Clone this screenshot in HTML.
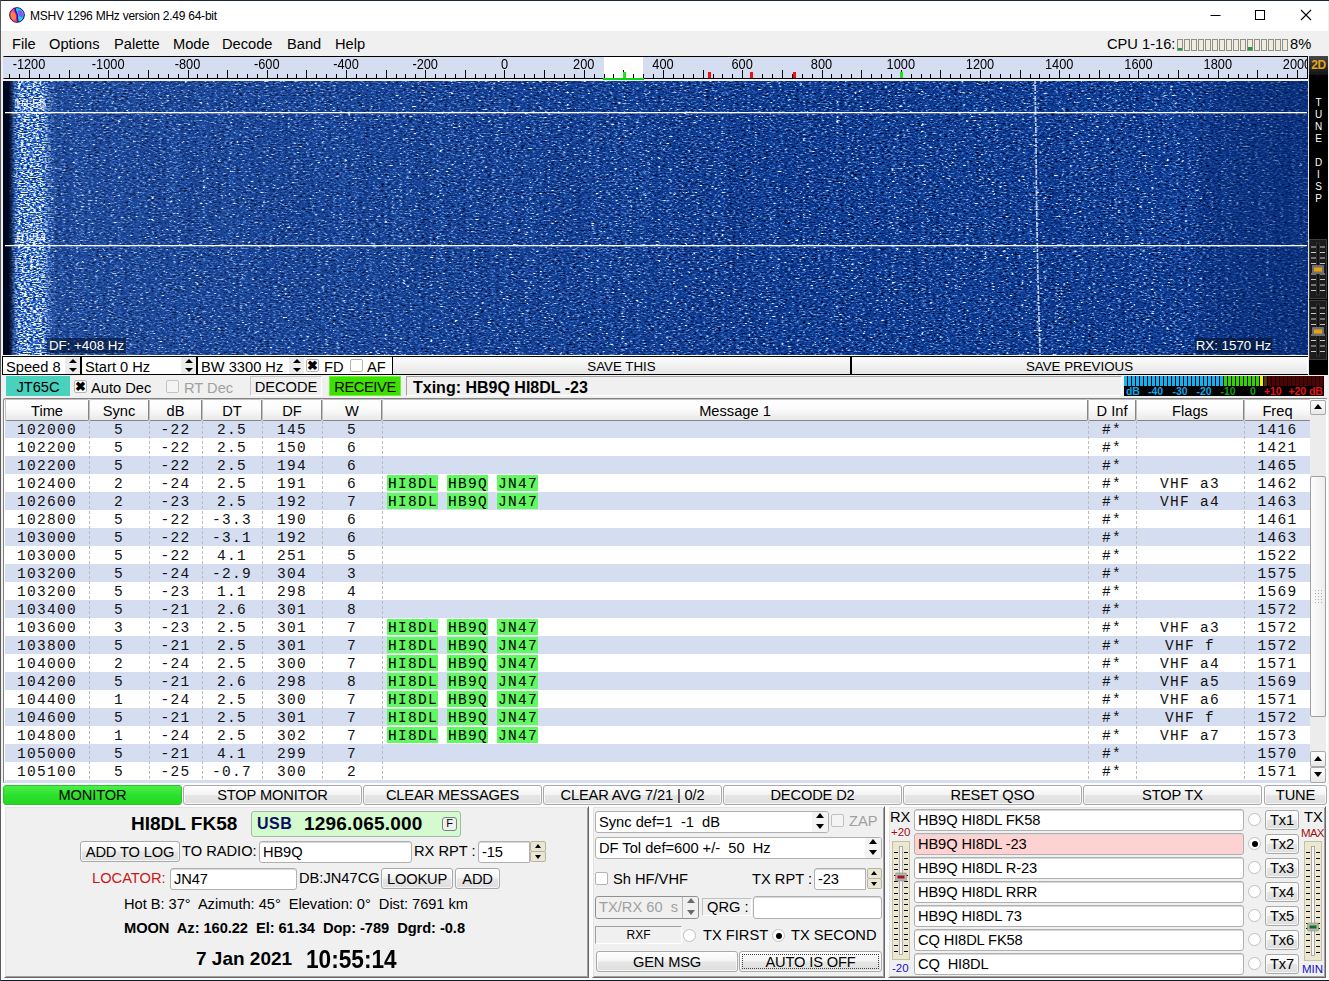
<!DOCTYPE html>
<html><head><meta charset="utf-8"><title>MSHV 1296 MHz version 2.49 64-bit</title>
<style>
*{box-sizing:border-box;margin:0;padding:0}
html,body{width:1329px;height:981px;overflow:hidden;background:#f0f0f0}
body{position:relative;font-family:"Liberation Sans",sans-serif;font-size:14.67px;color:#000}
.a{position:absolute}
i{font-style:normal}
#win{position:absolute;left:0;top:0;width:1329px;height:981px;background:#f0f0f0;overflow:hidden}
#wb{left:0;top:0;width:1329px;height:981px;border-left:1px solid #5a5a5a;border-top:1px solid #1c2838;border-bottom:1px solid #0c1c2c;z-index:9;pointer-events:none}
#lo{left:1px;top:783px;width:1328px;height:197px;background:#fbfbfb}
#title{left:1px;top:1px;width:1327px;height:30px;background:#fff}
#title .t{left:29px;top:7px;font-size:12px;line-height:16px;white-space:nowrap;letter-spacing:-0.24px}
#menu{left:1px;top:31px;width:1327px;height:25px;background:#f0f0f0}
#menu span{position:absolute;top:5px;line-height:17px;white-space:nowrap}
#scale{left:3px;top:56px;width:1305px;border-right:1px solid #000;height:23px;background:#d5ddf1;border-top:1px solid #000;border-bottom:1px solid #000;border-left:1px solid #d5ddf1;overflow:hidden}
.tk{position:absolute;width:1px;background:#000;top:17px;height:4px;margin-left:-1px}
.tk.M{top:13px;height:8px}
.sl{position:absolute;top:1px;width:60px;text-align:center;font-size:12.800px;line-height:14px;margin-left:-1px;transform:scaleY(1.08);transform-origin:50% 60%}
#wf{left:3px;top:81px;width:1305px;height:274px;background:#0b3f9e;overflow:hidden}
.wl{color:#fff;font-size:13px;line-height:14px;opacity:.8}
.wb{color:#fff;font-size:13.33px;line-height:15px;height:15px;background:rgba(0,16,48,.6);text-align:center;white-space:nowrap}
#rp{left:1309px;top:56px;width:19px;height:319px;background:#000}
.b2d{left:0;top:0;width:19px;height:19px;background:linear-gradient(#484848,#141414);color:#e8a418;font-weight:bold;font-size:12px;line-height:19px;text-align:center;letter-spacing:-0.5px}
.vt{left:0;width:19px;text-align:center;color:#fff;font-size:10px;line-height:12px;margin-top:1px}
/* control row */
#ctl{left:2px;top:356px;width:1306px;border-left:1px solid #000;height:19px;background:#fff;border-top:1px solid #000;border-bottom:1px solid #000}
.sp{position:absolute;top:0;height:17px;background:#fff;border-right:1px solid #000;border-left:1px solid #000;font-size:14.67px;line-height:20px;white-space:nowrap;overflow:hidden}
.sp .tx{position:absolute;left:3px;top:0}
.sp .ar{position:absolute;right:0;top:0;width:15px;height:17px;background:#ececec}
.ar:before,.ar:after{content:"";position:absolute;left:3.500px;border:4px solid transparent}
.ar:before{top:-2px;border-bottom:4.500px solid #000}
.ar:after{top:10.500px;border-top:4.500px solid #000}
.cb{position:absolute;width:13px;height:13px;background:#fff;border:1px solid #b4b4b4;border-radius:2px}
.cb.x{color:#000;font-size:13px;line-height:11px;text-align:center;font-weight:bold}
.sbtn{position:absolute;top:0;height:17px;background:linear-gradient(#fdfdfd,#e6e6e6);font-size:13.330px;line-height:19px;text-align:center}
/* mode row */
.fr{position:absolute;border:1px solid;border-color:#a0a0a0 #fff #fff #a0a0a0}
.dbt{top:10.500px;font-size:10.500px;letter-spacing:-0.100px;font-weight:bold;line-height:9px;white-space:nowrap}
/* table */
#tbf{left:3px;top:398px;width:1325px;height:386px;border-radius:3px;border:1px solid;border-color:#828282 #fff #fff #828282;background:#fff}
#tb{left:5px;top:399px;width:1305px;height:384px;background:#fff;overflow:hidden}
.th{left:0;top:0;width:1306px;height:22px;background:#f0f0f0;z-index:3}
.hc{position:absolute;top:0;height:22px;text-align:center;line-height:23px;background:linear-gradient(#fff 0,#fbfbfb 45%,#e9e9e9 100%);border:1px solid;border-color:#c0c0c0 #858585 #858585 #c0c0c0;border-radius:2px;white-space:nowrap}
.tr{position:absolute;left:0;width:1306px;height:18px;font-family:"Liberation Mono",monospace;font-size:14.500px;letter-spacing:1.300px;line-height:20px;color:#111}
.tr.b{background:#d5ddf1}
.tr .c{position:absolute;top:0;text-align:center;white-space:pre;height:18px}
.tr .c.m{text-align:left;padding-left:5px}
.tr .c.m b{font-weight:normal;background:#62f862;display:inline-block;height:16px;line-height:18px;margin-top:1px;padding-left:1px;margin-right:-1px;color:#000;vertical-align:top}
.ds{position:absolute;top:22px;width:1px;height:360px;background:repeating-linear-gradient(#bcbcbc 0 3px,transparent 3px 5px)}
#vsb{left:1310px;top:400px;width:16px;height:383px;background:#ececec;background-image:radial-gradient(#d8d8d8 0.500px,transparent 0.600px);background-size:2px 2px}
.sbb{left:0;width:16px;background:linear-gradient(#fff,#e8e8e8);border:1px solid #a8a8a8;border-radius:2px}
.sbth{left:0;width:16px;background:linear-gradient(90deg,#fdfdfd,#ededed);border:1px solid #a0a0a0;border-radius:2px}
.up,.dn{position:absolute;left:3px;top:3px;border:4px solid transparent}
.up{border-bottom:5px solid #000;top:-1px}
.dn{border-top:5px solid #000;top:4px}
.grip{position:absolute;left:3px;top:112px;width:9px;height:15px;background-image:radial-gradient(#b0b0b0 0.800px,transparent 0.900px);background-size:3px 3px}
/* buttons */
.bt{letter-spacing:-0.150px;position:absolute;background:linear-gradient(#fefefe 0,#f4f4f4 48%,#e6e6e6 52%,#dedede 100%);border:1px solid #a9a9a9;border-radius:3px;text-align:center;white-space:nowrap;box-shadow:inset 0 0 0 1px rgba(255,255,255,.7)}
.bb{top:785px;height:20px;line-height:19px}
.pn{position:absolute;background:#f0f0f0;border:1px solid;border-color:#fff #666 #666 #fff;box-shadow:inset 1px 1px 0 #e3e3e3,inset -1px -1px 0 #a0a0a0}
.in{position:absolute;background:#fff;border:1px solid #b0b0b0;border-radius:3px;white-space:pre;overflow:hidden;box-shadow:inset 0 1px 0 #d8d8d8}
.in span{position:absolute;left:3px;letter-spacing:-0.120px}
.lb{position:absolute;white-space:pre;line-height:17px}
.sa{position:absolute;background:#e9e6d4;border:1px solid #b8b4a0;border-radius:2px}
.sa:after{content:"";position:absolute;left:50%;margin-left:-3.500px;border:3.500px solid transparent}
.sa.u:after{top:-1px;border-bottom:4.500px solid #000}
.sa.d:after{top:3px;border-top:4.500px solid #000}
.sw{position:absolute;background:#fff;border:1px solid #b0b0b0;border-radius:3px;overflow:hidden;white-space:pre}
.sw span{position:absolute;left:3px}
.sw .ab{position:absolute;right:0;top:0;bottom:0;width:16px;background:#f4f4f4}
.sw .ab:before,.sw .ab:after{content:"";position:absolute;left:4px;border:4px solid transparent}
.sw .ab:before{top:-3px;border-bottom:5px solid #000}
.sw .ab:after{bottom:-1px;border-top:5px solid #000}
.rd{position:absolute;width:13px;height:13px;border-radius:50%;background:#fff;border:1px solid #c0c0c0}
.rd.on:after{content:"";position:absolute;left:2.500px;top:2.500px;width:6px;height:6px;border-radius:50%;background:#000}
</style></head><body><div id="win">
<div id="wb" class="a"></div>
<div id="title" class="a">
<svg class="a" style="left:8px;top:6px" width="16" height="16" viewBox="0 0 16 16"><defs><clipPath id="ic"><circle cx="8" cy="8" r="7.300"/></clipPath></defs><g clip-path="url(#ic)"><rect width="16" height="16" fill="#ff3cb4"/><ellipse cx="4.500" cy="8.800" rx="2.500" ry="3.700" fill="#ff8a30" transform="rotate(-18 4.500 8.800)"/><path d="M6.200 0C5.200 4 9 7 8.400 10 8 13 9.300 15 10.300 16H16V0z" fill="#16d2ff"/><path d="M6.200 0C5.200 4 9 7 8.400 10 8 13 9.300 15 10.300 16" fill="none" stroke="#1414c8" stroke-width="1.500"/><path d="M5.300 0C4.300 4 8.100 7 7.500 10 7.100 13 8.400 15 9.400 16" fill="none" stroke="#e8103c" stroke-width="0.800"/><ellipse cx="11.600" cy="6.600" rx="2.200" ry="3.800" fill="#8c50ff" transform="rotate(-20 11.600 6.600)"/><path d="M15.500 5c.3 3-.5 6-3 9" fill="none" stroke="#2a30d8" stroke-width="1"/></g><circle cx="8" cy="8" r="7.400" fill="none" stroke="#1c1c2c" stroke-width="0.900"/></svg>
<div class="a t">MSHV 1296 MHz version 2.49 64-bit</div>
<svg class="a" style="left:1200px;top:0" width="127" height="30" viewBox="0 0 127 30"><path d="M9.500 14.500h10" stroke="#000" stroke-width="1" fill="none"/><rect x="54.500" y="9.500" width="9" height="9" fill="none" stroke="#000" stroke-width="1"/><path d="M100 9l10 10M110 9l-10 10" stroke="#000" stroke-width="1.100" fill="none"/></svg>
</div>
<div id="menu" class="a">
<span style="left:11px">File</span><span style="left:48px">Options</span><span style="left:113px">Palette</span><span style="left:172px">Mode</span><span style="left:221px">Decode</span><span style="left:286px">Band</span><span style="left:334px">Help</span>
<span style="left:1106px">CPU 1-16:</span><span style="left:1289px">8%</span>
<div class="a" id="cpu" style="left:1176px;top:8px;width:112px;height:13px"><i class="a" style="left:0px;top:0;width:6px;height:12px;background:#f0edd9;border:1px solid #8e8e8e"><i class="a" style="left:0;bottom:0;width:4px;height:2px;background:#18a040"></i></i><i class="a" style="left:7px;top:0;width:6px;height:12px;background:#f0edd9;border:1px solid #8e8e8e"></i><i class="a" style="left:14px;top:0;width:6px;height:12px;background:#f0edd9;border:1px solid #8e8e8e"></i><i class="a" style="left:21px;top:0;width:6px;height:12px;background:#f0edd9;border:1px solid #8e8e8e"></i><i class="a" style="left:28px;top:0;width:6px;height:12px;background:#f0edd9;border:1px solid #8e8e8e"></i><i class="a" style="left:35px;top:0;width:6px;height:12px;background:#f0edd9;border:1px solid #8e8e8e"></i><i class="a" style="left:42px;top:0;width:6px;height:12px;background:#f0edd9;border:1px solid #8e8e8e"></i><i class="a" style="left:49px;top:0;width:6px;height:12px;background:#f0edd9;border:1px solid #8e8e8e"></i><i class="a" style="left:56px;top:0;width:6px;height:12px;background:#f0edd9;border:1px solid #8e8e8e"></i><i class="a" style="left:63px;top:0;width:6px;height:12px;background:#f0edd9;border:1px solid #8e8e8e"></i><i class="a" style="left:70px;top:0;width:6px;height:12px;background:#f0edd9;border:1px solid #8e8e8e"><i class="a" style="left:0;bottom:0;width:4px;height:3px;background:#18a040"></i></i><i class="a" style="left:77px;top:0;width:6px;height:12px;background:#f0edd9;border:1px solid #8e8e8e"></i><i class="a" style="left:84px;top:0;width:6px;height:12px;background:#f0edd9;border:1px solid #8e8e8e"></i><i class="a" style="left:91px;top:0;width:6px;height:12px;background:#f0edd9;border:1px solid #8e8e8e"></i><i class="a" style="left:98px;top:0;width:6px;height:12px;background:#f0edd9;border:1px solid #8e8e8e"></i><i class="a" style="left:105px;top:0;width:6px;height:12px;background:#f0edd9;border:1px solid #8e8e8e"></i></div>
</div>
<div id="scale" class="a">
<div class="a" style="left:600px;top:0;width:39px;height:21px;background:#fff"></div>
<i class="tk" style="left:6px"></i>
<i class="tk" style="left:16px"></i>
<i class="tk M" style="left:26px"></i>
<i class="tk" style="left:36px"></i>
<i class="tk" style="left:46px"></i>
<i class="tk" style="left:56px"></i>
<i class="tk M" style="left:66px"></i>
<i class="tk" style="left:76px"></i>
<i class="tk" style="left:85px"></i>
<i class="tk" style="left:95px"></i>
<i class="tk M" style="left:105px"></i>
<i class="tk" style="left:115px"></i>
<i class="tk" style="left:125px"></i>
<i class="tk" style="left:135px"></i>
<i class="tk M" style="left:145px"></i>
<i class="tk" style="left:155px"></i>
<i class="tk" style="left:165px"></i>
<i class="tk" style="left:175px"></i>
<i class="tk M" style="left:185px"></i>
<i class="tk" style="left:194px"></i>
<i class="tk" style="left:204px"></i>
<i class="tk" style="left:214px"></i>
<i class="tk M" style="left:224px"></i>
<i class="tk" style="left:234px"></i>
<i class="tk" style="left:244px"></i>
<i class="tk" style="left:254px"></i>
<i class="tk M" style="left:264px"></i>
<i class="tk" style="left:274px"></i>
<i class="tk" style="left:284px"></i>
<i class="tk" style="left:293px"></i>
<i class="tk M" style="left:303px"></i>
<i class="tk" style="left:313px"></i>
<i class="tk" style="left:323px"></i>
<i class="tk" style="left:333px"></i>
<i class="tk M" style="left:343px"></i>
<i class="tk" style="left:353px"></i>
<i class="tk" style="left:363px"></i>
<i class="tk" style="left:373px"></i>
<i class="tk M" style="left:383px"></i>
<i class="tk" style="left:393px"></i>
<i class="tk" style="left:402px"></i>
<i class="tk" style="left:412px"></i>
<i class="tk M" style="left:422px"></i>
<i class="tk" style="left:432px"></i>
<i class="tk" style="left:442px"></i>
<i class="tk" style="left:452px"></i>
<i class="tk M" style="left:462px"></i>
<i class="tk" style="left:472px"></i>
<i class="tk" style="left:482px"></i>
<i class="tk" style="left:492px"></i>
<i class="tk M" style="left:501px"></i>
<i class="tk" style="left:511px"></i>
<i class="tk" style="left:521px"></i>
<i class="tk" style="left:531px"></i>
<i class="tk M" style="left:541px"></i>
<i class="tk" style="left:551px"></i>
<i class="tk" style="left:561px"></i>
<i class="tk" style="left:571px"></i>
<i class="tk M" style="left:581px"></i>
<i class="tk" style="left:591px"></i>
<i class="tk" style="left:601px"></i>
<i class="tk" style="left:610px"></i>
<i class="tk M" style="left:620px"></i>
<i class="tk" style="left:630px"></i>
<i class="tk" style="left:640px"></i>
<i class="tk" style="left:650px"></i>
<i class="tk M" style="left:660px"></i>
<i class="tk" style="left:670px"></i>
<i class="tk" style="left:680px"></i>
<i class="tk" style="left:690px"></i>
<i class="tk M" style="left:700px"></i>
<i class="tk" style="left:710px"></i>
<i class="tk" style="left:719px"></i>
<i class="tk" style="left:729px"></i>
<i class="tk M" style="left:739px"></i>
<i class="tk" style="left:749px"></i>
<i class="tk" style="left:759px"></i>
<i class="tk" style="left:769px"></i>
<i class="tk M" style="left:779px"></i>
<i class="tk" style="left:789px"></i>
<i class="tk" style="left:799px"></i>
<i class="tk" style="left:809px"></i>
<i class="tk M" style="left:819px"></i>
<i class="tk" style="left:828px"></i>
<i class="tk" style="left:838px"></i>
<i class="tk" style="left:848px"></i>
<i class="tk M" style="left:858px"></i>
<i class="tk" style="left:868px"></i>
<i class="tk" style="left:878px"></i>
<i class="tk" style="left:888px"></i>
<i class="tk M" style="left:898px"></i>
<i class="tk" style="left:908px"></i>
<i class="tk" style="left:918px"></i>
<i class="tk" style="left:927px"></i>
<i class="tk M" style="left:937px"></i>
<i class="tk" style="left:947px"></i>
<i class="tk" style="left:957px"></i>
<i class="tk" style="left:967px"></i>
<i class="tk M" style="left:977px"></i>
<i class="tk" style="left:987px"></i>
<i class="tk" style="left:997px"></i>
<i class="tk" style="left:1007px"></i>
<i class="tk M" style="left:1017px"></i>
<i class="tk" style="left:1027px"></i>
<i class="tk" style="left:1036px"></i>
<i class="tk" style="left:1046px"></i>
<i class="tk M" style="left:1056px"></i>
<i class="tk" style="left:1066px"></i>
<i class="tk" style="left:1076px"></i>
<i class="tk" style="left:1086px"></i>
<i class="tk M" style="left:1096px"></i>
<i class="tk" style="left:1106px"></i>
<i class="tk" style="left:1116px"></i>
<i class="tk" style="left:1126px"></i>
<i class="tk M" style="left:1135px"></i>
<i class="tk" style="left:1145px"></i>
<i class="tk" style="left:1155px"></i>
<i class="tk" style="left:1165px"></i>
<i class="tk M" style="left:1175px"></i>
<i class="tk" style="left:1185px"></i>
<i class="tk" style="left:1195px"></i>
<i class="tk" style="left:1205px"></i>
<i class="tk M" style="left:1215px"></i>
<i class="tk" style="left:1225px"></i>
<i class="tk" style="left:1235px"></i>
<i class="tk" style="left:1244px"></i>
<i class="tk M" style="left:1254px"></i>
<i class="tk" style="left:1264px"></i>
<i class="tk" style="left:1274px"></i>
<i class="tk" style="left:1284px"></i>
<i class="tk M" style="left:1294px"></i>
<span class="sl" style="left:-4.0px">-1200</span>
<span class="sl" style="left:75.2px">-1000</span>
<span class="sl" style="left:154.5px">-800</span>
<span class="sl" style="left:233.8px">-600</span>
<span class="sl" style="left:313.0px">-400</span>
<span class="sl" style="left:392.2px">-200</span>
<span class="sl" style="left:471.5px">0</span>
<span class="sl" style="left:550.8px">200</span>
<span class="sl" style="left:630.0px">400</span>
<span class="sl" style="left:709.2px">600</span>
<span class="sl" style="left:788.5px">800</span>
<span class="sl" style="left:867.8px">1000</span>
<span class="sl" style="left:947.0px">1200</span>
<span class="sl" style="left:1026.2px">1400</span>
<span class="sl" style="left:1105.5px">1600</span>
<span class="sl" style="left:1184.8px">1800</span>
<span class="sl" style="left:1264.0px">2000</span>
<div class="a" style="left:619px;top:15px;width:3px;height:7px;background:#20e020"></div>
<div class="a" style="left:704px;top:15px;width:3px;height:6px;background:#f01010"></div>
<div class="a" style="left:746px;top:15px;width:3px;height:6px;background:#f01010"></div>
<div class="a" style="left:789px;top:15px;width:3px;height:6px;background:#f01010"></div>
<div class="a" style="left:896px;top:15px;width:3px;height:6px;background:#20e020"></div>
</div>
<div class="a" style="left:603px;top:78px;width:41px;height:2px;background:#10d010"></div>

<div id="wf" class="a">
<svg class="a" style="left:0;top:0" width="1305" height="274">
<defs>
<filter id="nz" x="0" y="0" width="100%" height="100%" color-interpolation-filters="sRGB">
<feTurbulence type="fractalNoise" baseFrequency="0.33 0.71" numOctaves="2" seed="7"/>
<feColorMatrix type="matrix" values="1 0 0 0 0  1 0 0 0 0  1 0 0 0 0  0 0 0 0 1" result="t1"/>
<feTurbulence type="fractalNoise" baseFrequency="0.27 0.63" numOctaves="2" seed="31"/>
<feColorMatrix type="matrix" values="1 0 0 0 0  1 0 0 0 0  1 0 0 0 0  0 0 0 0 1" result="t2"/>
<feComposite in="t1" in2="t2" operator="arithmetic" k1="0" k2="1" k3="1" k4="-0.5" result="t12"/>
<feTurbulence type="fractalNoise" baseFrequency="0.21 0.004" numOctaves="2" seed="5"/>
<feColorMatrix type="matrix" values="1 0 0 0 0  1 0 0 0 0  1 0 0 0 0  0 0 0 0 1" result="t3"/>
<feComposite in="t12" in2="t3" operator="arithmetic" k1="0" k2="1" k3="0.16" k4="-0.08" result="t"/>
<feColorMatrix in="t" type="matrix" values="1 0 0 0 0  1 0 0 0 0  1 0 0 0 0  0 0 0 0 1"/>
<feComponentTransfer>
<feFuncR type="table" tableValues="0 0 .01 .03 .04 .05 .09 .22 .4 .72 1"/>
<feFuncG type="table" tableValues="0 .03 .08 .17 .205 .235 .285 .41 .57 .81 1"/>
<feFuncB type="table" tableValues=".05 .15 .28 .46 .535 .58 .63 .72 .81 .93 1"/>
</feComponentTransfer>
</filter>
<filter id="nz2" x="0" y="0" width="100%" height="100%" color-interpolation-filters="sRGB">
<feTurbulence type="fractalNoise" baseFrequency="0.33 0.8" numOctaves="2" seed="23" result="t"/>
<feColorMatrix in="t" type="matrix" values="1 0 0 0 0  1 0 0 0 0  1 0 0 0 0  0 0 0 0 1"/>
<feComponentTransfer>
<feFuncR type="table" tableValues="0 0 0 0.03 0.08 0.3 0.75 1 1 1 1"/>
<feFuncG type="table" tableValues="0 0 0.06 0.2 0.32 0.5 0.84 1 1 1 1"/>
<feFuncB type="table" tableValues="0 0.2 0.42 0.6 0.7 0.82 0.96 1 0.1 0 0"/>
</feComponentTransfer>
</filter>
<linearGradient id="lm" x1="0" x2="1"><stop offset="0" stop-color="#fff" stop-opacity="0"/><stop offset="0.1" stop-color="#fff" stop-opacity="0.5"/><stop offset="0.2" stop-color="#fff" stop-opacity="1"/><stop offset="0.7" stop-color="#fff" stop-opacity="1"/><stop offset="0.85" stop-color="#fff" stop-opacity="0.5"/><stop offset="1" stop-color="#fff" stop-opacity="0"/></linearGradient>
<mask id="mk"><rect x="7" y="0" width="46" height="274" fill="url(#lm)"/></mask>
<linearGradient id="dk" x1="0" x2="1"><stop offset="0" stop-color="#000820" stop-opacity="1"/><stop offset="0.45" stop-color="#000820" stop-opacity="1"/><stop offset="1" stop-color="#000820" stop-opacity="0"/></linearGradient>
<linearGradient id="lt" x1="0" x2="1"><stop offset="0" stop-color="#88a4d4" stop-opacity="0.14"/><stop offset="1" stop-color="#88a4d4" stop-opacity="0"/></linearGradient>
<linearGradient id="rd" x1="0" x2="1"><stop offset="0" stop-color="#04256a" stop-opacity="0"/><stop offset="0.4" stop-color="#04256a" stop-opacity="0.4"/><stop offset="1" stop-color="#04256a" stop-opacity="0.55"/></linearGradient>
</defs>
<rect x="0" y="0" width="1305" height="274" filter="url(#nz)"/>
<g mask="url(#mk)"><rect x="0" y="0" width="70" height="274" filter="url(#nz2)"/></g>
<rect x="0" y="0" width="12" height="274" fill="url(#dk)"/>
<rect x="1180" y="0" width="125" height="274" fill="url(#rd)"/>
<rect x="50" y="0" width="750" height="274" fill="url(#lt)"/>
<path d="M1032 0L1033 60L1033.500 120L1035 200L1037 274" stroke="#dfe8fa" stroke-width="1.700" stroke-dasharray="3 1 6 1 2 2 5 1" opacity="0.8" fill="none"/>
<rect x="2" y="31" width="1302" height="1.300" fill="#fff"/>
<rect x="2" y="164" width="1302" height="1.300" fill="#fff"/>
</svg>
<div class="a wl" style="left:11px;top:16px">10:55</div>
<div class="a wl" style="left:11px;top:150px">10:54</div>
<div class="a wb" style="left:44px;top:257px;width:79px">DF: +408 Hz</div>
<div class="a wb" style="left:1192px;top:257px;width:77px">RX: 1570 Hz</div>
</div>
<div class="a" style="left:3px;top:355px;width:1305px;height:1px;background:#fff"></div>
<div class="a" style="left:1308px;top:56px;width:1px;height:319px;background:#e4e4e4"></div>
<div id="rp" class="a">
<div class="a b2d">2D</div>
<div class="a vt" style="top:40px">T</div><div class="a vt" style="top:52px">U</div><div class="a vt" style="top:64px">N</div><div class="a vt" style="top:76px">E</div>
<div class="a vt" style="top:100px">D</div><div class="a vt" style="top:112px">I</div><div class="a vt" style="top:124px">S</div><div class="a vt" style="top:136px">P</div>
<svg class="a" style="left:0;top:183px" width="19" height="122" viewBox="0 0 19 122">
<g id="sld"><rect x="0.500" y="0.500" width="17" height="59" fill="#1c1c1c" stroke="#3c3c3c"/><rect x="7.500" y="4" width="3" height="52" fill="#111" stroke="#444" stroke-width="0.600"/>
<path d="M2 8h5M11 8h5M2 13.500h5M11 13.500h5M2 19h5M11 19h5M2 24.500h5M11 24.500h5M2 35h5M11 35h5M2 40.500h5M11 40.500h5M2 46h5M11 46h5M2 51.500h5M11 51.500h5" stroke="#c8c8c8" stroke-width="1"/></g>
<use href="#sld" y="61"/>
<rect x="3" y="26" width="12" height="9" rx="1" fill="#707070"/><rect x="5" y="28.500" width="8" height="4" fill="#e8a010"/>
<rect x="3" y="88" width="12" height="9" rx="1" fill="#707070"/><rect x="5" y="90.500" width="8" height="4" fill="#e8a010"/>
</svg>
</div>

<div id="ctl" class="a">
<div class="sp" style="left:0;width:78px;border-left:0"><span class="tx" style="left:3px">Speed 8</span><i class="ar"></i></div>
<div class="sp" style="left:78px;width:116px"><span class="tx">Start 0 Hz</span><i class="ar"></i></div>
<div class="sp" style="left:194px;width:108px"><span class="tx">BW 3300 Hz</span><i class="ar"></i></div>
<div class="sp" style="left:301px;width:89px;border-left:0"><i class="cb x" style="left:2px;top:2px">&#10006;</i><span class="tx" style="left:20px">FD</span><i class="cb" style="left:46px;top:2px"></i><span class="tx" style="left:63px">AF</span></div>
<div class="sbtn" style="left:390px;width:457px">SAVE THIS</div>
<div class="a" style="left:847px;top:-1px;width:2px;height:19px;background:#000"></div>
<div class="sbtn" style="left:849px;width:455px">SAVE PREVIOUS</div>
</div>
<div class="a" style="left:6px;top:376px;width:64px;height:20px;background:#48d1bc;text-align:center;line-height:22px">JT65C</div>
<i class="cb x" style="left:74px;top:380px">&#10006;</i><div class="a" style="left:91px;top:379px;line-height:18px">Auto Dec</div>
<i class="cb" style="left:166px;top:380px;background:#f4f4f4;border-color:#c4c4c4"></i><div class="a" style="left:184px;top:379px;line-height:18px;color:#a0a0a0">RT Dec</div>
<div class="fr" style="left:250px;top:376px;width:72px;height:20px;text-align:center;line-height:20px;border-color:#c8c8c8 #fff #fff #c8c8c8">DECODE</div>
<div class="a" style="left:329px;top:376px;width:72px;height:20px;background:#3ee000;border:1px solid #6cf03c;text-align:center;line-height:20px;letter-spacing:-0.400px">RECEIVE</div>
<div class="fr" style="left:406px;top:376px;width:716px;height:20px;font-weight:bold;font-size:16px;line-height:21px;padding-left:6px">Txing: HB9Q HI8DL -23</div>
<div id="dbm" class="a" style="left:1124px;top:376px;width:200px;height:20px;background:#000;overflow:hidden">
<div class="a" style="left:0;top:0;width:100px;height:10px;background:repeating-linear-gradient(90deg,#10b4f4 0 3px,#000 3px 4px)"></div>
<div class="a" style="left:100px;top:0;width:36px;height:10px;background:repeating-linear-gradient(90deg,#30d400 0 3px,#000 3px 4px)"></div>
<div class="a" style="left:136px;top:0;width:4px;height:10px;background:repeating-linear-gradient(90deg,#f4f000 0 3px,#000 3px 4px)"></div>
<div class="a" style="left:140px;top:0;width:4px;height:10px;background:repeating-linear-gradient(90deg,#503410 0 3px,#000 3px 4px)"></div>
<div class="a" style="left:144px;top:0;width:56px;height:10px;background:repeating-linear-gradient(90deg,#4c0404 0 3px,#1c0000 3px 4px)"></div>
<div class="a dbt" style="left:2px;color:#10a8e8">dB</div><div class="a dbt" style="left:24px;color:#10a8e8">-40</div><div class="a dbt" style="left:48.500px;color:#10a8e8">-30</div><div class="a dbt" style="left:72.500px;color:#10a8e8">-20</div>
<div class="a dbt" style="left:96.500px;color:#10a010">-10</div><div class="a dbt" style="left:126px;color:#10a010">0</div>
<div class="a dbt" style="left:140px;color:#f01010">+10</div><div class="a dbt" style="left:164.500px;color:#f01010">+20</div><div class="a dbt" style="left:185px;color:#f01010">dB</div>
</div>

<div id="tbf" class="a"></div>

<div id="tb" class="a">
<div class="a th">
<div class="hc" style="left:0px;width:84px">Time</div>
<div class="hc" style="left:84px;width:60px">Sync</div>
<div class="hc" style="left:144px;width:53px">dB</div>
<div class="hc" style="left:197px;width:60px">DT</div>
<div class="hc" style="left:257px;width:60px">DF</div>
<div class="hc" style="left:317px;width:60px">W</div>
<div class="hc" style="left:377px;width:706px">Message 1</div>
<div class="hc" style="left:1083px;width:48px">D Inf</div>
<div class="hc" style="left:1131px;width:108px">Flags</div>
<div class="hc" style="left:1239px;width:67px">Freq</div>
</div>
<div class="tr b" style="top:21px">
<span class="c" style="left:0px;width:84px">102000</span>
<span class="c" style="left:84px;width:60px">5</span>
<span class="c" style="left:144px;width:53px">-22</span>
<span class="c" style="left:197px;width:60px">2.5</span>
<span class="c" style="left:257px;width:60px">145</span>
<span class="c" style="left:317px;width:60px">5</span>
<span class="c" style="left:1083px;width:48px">#*</span>
<span class="c" style="left:1239px;width:67px">1416</span>
</div>
<div class="tr" style="top:39px">
<span class="c" style="left:0px;width:84px">102200</span>
<span class="c" style="left:84px;width:60px">5</span>
<span class="c" style="left:144px;width:53px">-22</span>
<span class="c" style="left:197px;width:60px">2.5</span>
<span class="c" style="left:257px;width:60px">150</span>
<span class="c" style="left:317px;width:60px">6</span>
<span class="c" style="left:1083px;width:48px">#*</span>
<span class="c" style="left:1239px;width:67px">1421</span>
</div>
<div class="tr b" style="top:57px">
<span class="c" style="left:0px;width:84px">102200</span>
<span class="c" style="left:84px;width:60px">5</span>
<span class="c" style="left:144px;width:53px">-22</span>
<span class="c" style="left:197px;width:60px">2.5</span>
<span class="c" style="left:257px;width:60px">194</span>
<span class="c" style="left:317px;width:60px">6</span>
<span class="c" style="left:1083px;width:48px">#*</span>
<span class="c" style="left:1239px;width:67px">1465</span>
</div>
<div class="tr" style="top:75px">
<span class="c" style="left:0px;width:84px">102400</span>
<span class="c" style="left:84px;width:60px">2</span>
<span class="c" style="left:144px;width:53px">-24</span>
<span class="c" style="left:197px;width:60px">2.5</span>
<span class="c" style="left:257px;width:60px">191</span>
<span class="c" style="left:317px;width:60px">6</span>
<span class="c m" style="left:377px;width:706px"><b>HI8DL</b> <b>HB9Q</b> <b>JN47</b></span>
<span class="c" style="left:1083px;width:48px">#*</span>
<span class="c" style="left:1131px;width:108px">VHF a3</span>
<span class="c" style="left:1239px;width:67px">1462</span>
</div>
<div class="tr b" style="top:93px">
<span class="c" style="left:0px;width:84px">102600</span>
<span class="c" style="left:84px;width:60px">2</span>
<span class="c" style="left:144px;width:53px">-23</span>
<span class="c" style="left:197px;width:60px">2.5</span>
<span class="c" style="left:257px;width:60px">192</span>
<span class="c" style="left:317px;width:60px">7</span>
<span class="c m" style="left:377px;width:706px"><b>HI8DL</b> <b>HB9Q</b> <b>JN47</b></span>
<span class="c" style="left:1083px;width:48px">#*</span>
<span class="c" style="left:1131px;width:108px">VHF a4</span>
<span class="c" style="left:1239px;width:67px">1463</span>
</div>
<div class="tr" style="top:111px">
<span class="c" style="left:0px;width:84px">102800</span>
<span class="c" style="left:84px;width:60px">5</span>
<span class="c" style="left:144px;width:53px">-22</span>
<span class="c" style="left:197px;width:60px">-3.3</span>
<span class="c" style="left:257px;width:60px">190</span>
<span class="c" style="left:317px;width:60px">6</span>
<span class="c" style="left:1083px;width:48px">#*</span>
<span class="c" style="left:1239px;width:67px">1461</span>
</div>
<div class="tr b" style="top:129px">
<span class="c" style="left:0px;width:84px">103000</span>
<span class="c" style="left:84px;width:60px">5</span>
<span class="c" style="left:144px;width:53px">-22</span>
<span class="c" style="left:197px;width:60px">-3.1</span>
<span class="c" style="left:257px;width:60px">192</span>
<span class="c" style="left:317px;width:60px">6</span>
<span class="c" style="left:1083px;width:48px">#*</span>
<span class="c" style="left:1239px;width:67px">1463</span>
</div>
<div class="tr" style="top:147px">
<span class="c" style="left:0px;width:84px">103000</span>
<span class="c" style="left:84px;width:60px">5</span>
<span class="c" style="left:144px;width:53px">-22</span>
<span class="c" style="left:197px;width:60px">4.1</span>
<span class="c" style="left:257px;width:60px">251</span>
<span class="c" style="left:317px;width:60px">5</span>
<span class="c" style="left:1083px;width:48px">#*</span>
<span class="c" style="left:1239px;width:67px">1522</span>
</div>
<div class="tr b" style="top:165px">
<span class="c" style="left:0px;width:84px">103200</span>
<span class="c" style="left:84px;width:60px">5</span>
<span class="c" style="left:144px;width:53px">-24</span>
<span class="c" style="left:197px;width:60px">-2.9</span>
<span class="c" style="left:257px;width:60px">304</span>
<span class="c" style="left:317px;width:60px">3</span>
<span class="c" style="left:1083px;width:48px">#*</span>
<span class="c" style="left:1239px;width:67px">1575</span>
</div>
<div class="tr" style="top:183px">
<span class="c" style="left:0px;width:84px">103200</span>
<span class="c" style="left:84px;width:60px">5</span>
<span class="c" style="left:144px;width:53px">-23</span>
<span class="c" style="left:197px;width:60px">1.1</span>
<span class="c" style="left:257px;width:60px">298</span>
<span class="c" style="left:317px;width:60px">4</span>
<span class="c" style="left:1083px;width:48px">#*</span>
<span class="c" style="left:1239px;width:67px">1569</span>
</div>
<div class="tr b" style="top:201px">
<span class="c" style="left:0px;width:84px">103400</span>
<span class="c" style="left:84px;width:60px">5</span>
<span class="c" style="left:144px;width:53px">-21</span>
<span class="c" style="left:197px;width:60px">2.6</span>
<span class="c" style="left:257px;width:60px">301</span>
<span class="c" style="left:317px;width:60px">8</span>
<span class="c" style="left:1083px;width:48px">#*</span>
<span class="c" style="left:1239px;width:67px">1572</span>
</div>
<div class="tr" style="top:219px">
<span class="c" style="left:0px;width:84px">103600</span>
<span class="c" style="left:84px;width:60px">3</span>
<span class="c" style="left:144px;width:53px">-23</span>
<span class="c" style="left:197px;width:60px">2.5</span>
<span class="c" style="left:257px;width:60px">301</span>
<span class="c" style="left:317px;width:60px">7</span>
<span class="c m" style="left:377px;width:706px"><b>HI8DL</b> <b>HB9Q</b> <b>JN47</b></span>
<span class="c" style="left:1083px;width:48px">#*</span>
<span class="c" style="left:1131px;width:108px">VHF a3</span>
<span class="c" style="left:1239px;width:67px">1572</span>
</div>
<div class="tr b" style="top:237px">
<span class="c" style="left:0px;width:84px">103800</span>
<span class="c" style="left:84px;width:60px">5</span>
<span class="c" style="left:144px;width:53px">-21</span>
<span class="c" style="left:197px;width:60px">2.5</span>
<span class="c" style="left:257px;width:60px">301</span>
<span class="c" style="left:317px;width:60px">7</span>
<span class="c m" style="left:377px;width:706px"><b>HI8DL</b> <b>HB9Q</b> <b>JN47</b></span>
<span class="c" style="left:1083px;width:48px">#*</span>
<span class="c" style="left:1131px;width:108px">VHF f</span>
<span class="c" style="left:1239px;width:67px">1572</span>
</div>
<div class="tr" style="top:255px">
<span class="c" style="left:0px;width:84px">104000</span>
<span class="c" style="left:84px;width:60px">2</span>
<span class="c" style="left:144px;width:53px">-24</span>
<span class="c" style="left:197px;width:60px">2.5</span>
<span class="c" style="left:257px;width:60px">300</span>
<span class="c" style="left:317px;width:60px">7</span>
<span class="c m" style="left:377px;width:706px"><b>HI8DL</b> <b>HB9Q</b> <b>JN47</b></span>
<span class="c" style="left:1083px;width:48px">#*</span>
<span class="c" style="left:1131px;width:108px">VHF a4</span>
<span class="c" style="left:1239px;width:67px">1571</span>
</div>
<div class="tr b" style="top:273px">
<span class="c" style="left:0px;width:84px">104200</span>
<span class="c" style="left:84px;width:60px">5</span>
<span class="c" style="left:144px;width:53px">-21</span>
<span class="c" style="left:197px;width:60px">2.6</span>
<span class="c" style="left:257px;width:60px">298</span>
<span class="c" style="left:317px;width:60px">8</span>
<span class="c m" style="left:377px;width:706px"><b>HI8DL</b> <b>HB9Q</b> <b>JN47</b></span>
<span class="c" style="left:1083px;width:48px">#*</span>
<span class="c" style="left:1131px;width:108px">VHF a5</span>
<span class="c" style="left:1239px;width:67px">1569</span>
</div>
<div class="tr" style="top:291px">
<span class="c" style="left:0px;width:84px">104400</span>
<span class="c" style="left:84px;width:60px">1</span>
<span class="c" style="left:144px;width:53px">-24</span>
<span class="c" style="left:197px;width:60px">2.5</span>
<span class="c" style="left:257px;width:60px">300</span>
<span class="c" style="left:317px;width:60px">7</span>
<span class="c m" style="left:377px;width:706px"><b>HI8DL</b> <b>HB9Q</b> <b>JN47</b></span>
<span class="c" style="left:1083px;width:48px">#*</span>
<span class="c" style="left:1131px;width:108px">VHF a6</span>
<span class="c" style="left:1239px;width:67px">1571</span>
</div>
<div class="tr b" style="top:309px">
<span class="c" style="left:0px;width:84px">104600</span>
<span class="c" style="left:84px;width:60px">5</span>
<span class="c" style="left:144px;width:53px">-21</span>
<span class="c" style="left:197px;width:60px">2.5</span>
<span class="c" style="left:257px;width:60px">301</span>
<span class="c" style="left:317px;width:60px">7</span>
<span class="c m" style="left:377px;width:706px"><b>HI8DL</b> <b>HB9Q</b> <b>JN47</b></span>
<span class="c" style="left:1083px;width:48px">#*</span>
<span class="c" style="left:1131px;width:108px">VHF f</span>
<span class="c" style="left:1239px;width:67px">1572</span>
</div>
<div class="tr" style="top:327px">
<span class="c" style="left:0px;width:84px">104800</span>
<span class="c" style="left:84px;width:60px">1</span>
<span class="c" style="left:144px;width:53px">-24</span>
<span class="c" style="left:197px;width:60px">2.5</span>
<span class="c" style="left:257px;width:60px">302</span>
<span class="c" style="left:317px;width:60px">7</span>
<span class="c m" style="left:377px;width:706px"><b>HI8DL</b> <b>HB9Q</b> <b>JN47</b></span>
<span class="c" style="left:1083px;width:48px">#*</span>
<span class="c" style="left:1131px;width:108px">VHF a7</span>
<span class="c" style="left:1239px;width:67px">1573</span>
</div>
<div class="tr b" style="top:345px">
<span class="c" style="left:0px;width:84px">105000</span>
<span class="c" style="left:84px;width:60px">5</span>
<span class="c" style="left:144px;width:53px">-21</span>
<span class="c" style="left:197px;width:60px">4.1</span>
<span class="c" style="left:257px;width:60px">299</span>
<span class="c" style="left:317px;width:60px">7</span>
<span class="c" style="left:1083px;width:48px">#*</span>
<span class="c" style="left:1239px;width:67px">1570</span>
</div>
<div class="tr" style="top:363px">
<span class="c" style="left:0px;width:84px">105100</span>
<span class="c" style="left:84px;width:60px">5</span>
<span class="c" style="left:144px;width:53px">-25</span>
<span class="c" style="left:197px;width:60px">-0.7</span>
<span class="c" style="left:257px;width:60px">300</span>
<span class="c" style="left:317px;width:60px">2</span>
<span class="c" style="left:1083px;width:48px">#*</span>
<span class="c" style="left:1239px;width:67px">1571</span>
</div>
<div class="tr b" style="top:381px"></div>
<i class="ds" style="left:84px"></i>
<i class="ds" style="left:144px"></i>
<i class="ds" style="left:197px"></i>
<i class="ds" style="left:257px"></i>
<i class="ds" style="left:317px"></i>
<i class="ds" style="left:377px"></i>
<i class="ds" style="left:1083px"></i>
<i class="ds" style="left:1131px"></i>
<i class="ds" style="left:1239px"></i>
</div>
<div id="vsb" class="a">
<div class="a sbb" style="top:0;height:15px"><i class="up"></i></div>
<div class="a sbth" style="top:76px;height:241px"><i class="grip"></i></div>
<div class="a sbb" style="top:351px;height:16px"><i class="up" style="top:0"></i></div>
<div class="a sbb" style="top:367px;height:16px"><i class="dn"></i></div>
</div>

<div id="lo" class="a"></div>
<div class="bt bb" style="left:3px;width:179px;background:linear-gradient(#48f048,#2ee02e 50%,#22d822);border-color:#30c030;box-shadow:none">MONITOR</div>
<div class="bt bb" style="left:183px;width:179px">STOP MONITOR</div>
<div class="bt bb" style="left:363px;width:179px">CLEAR MESSAGES</div>
<div class="bt bb" style="left:543px;width:179px">CLEAR AVG 7/21 | 0/2</div>
<div class="bt bb" style="left:723px;width:179px">DECODE D2</div>
<div class="bt bb" style="left:903px;width:179px">RESET QSO</div>
<div class="bt bb" style="left:1083px;width:179px">STOP TX</div>
<div class="bt bb" style="left:1264px;width:63px">TUNE</div>

<div class="pn" style="left:4px;top:806px;width:585px;height:172px"></div>
<div class="lb" style="left:131px;top:813px;font-weight:bold;font-size:19px;line-height:22px">HI8DL FK58</div>
<div class="a" style="left:251px;top:811px;width:210px;height:26px;background:#d3fbcf;border:1px solid #a8b8a8;border-radius:3px"></div>
<div class="lb" style="left:257px;top:814px;font-weight:bold;font-size:16px;line-height:20px;color:#0c0c60;letter-spacing:0.500px">USB</div>
<div class="lb" style="left:304px;top:813px;font-weight:bold;font-size:19px;line-height:22px;letter-spacing:0.200px">1296.065.000</div>
<div class="a" style="left:442px;top:817px;width:15px;height:14px;border:1px solid #808080;border-radius:3px;background:#f0f0f0;font-size:11px;line-height:11px;text-align:center">F</div>
<div class="bt" style="left:80px;top:841px;width:100px;height:21px;line-height:20px">ADD TO LOG</div>
<div class="lb" style="left:182px;top:843px">TO RADIO:</div>
<div class="in" style="left:259px;top:841px;width:153px;height:22px;line-height:20px"><span>HB9Q</span></div>
<div class="lb" style="left:414px;top:843px">RX RPT :</div>
<div class="in" style="left:478px;top:841px;width:52px;height:22px;line-height:20px;border-radius:3px 0 0 3px"><span>-15</span></div>
<i class="sa u" style="left:530px;top:841px;width:16px;height:11px"></i><i class="sa d" style="left:530px;top:851px;width:16px;height:11px"></i>
<div class="lb" style="left:92px;top:870px;color:#c81818">LOCATOR:</div>
<div class="in" style="left:170px;top:868px;width:127px;height:22px;line-height:20px"><span>JN47</span></div>
<div class="lb" style="left:299px;top:870px">DB:JN47CG</div>
<div class="bt" style="left:381px;top:868px;width:72px;height:21px;line-height:20px">LOOKUP</div>
<div class="bt" style="left:455px;top:868px;width:45px;height:21px;line-height:20px">ADD</div>
<div class="lb" style="left:124px;top:896px;letter-spacing:-0.035px">Hot B: 37°  Azimuth: 45°  Elevation: 0°  Dist: 7691 km</div>
<div class="lb" style="left:124px;top:920px;font-weight:bold;letter-spacing:-0.060px">MOON  Az: 160.22  El: 61.34  Dop: -789  Dgrd: -0.8</div>
<div class="lb" style="left:196px;top:948px;font-weight:bold;font-size:19px;line-height:22px">7 Jan 2021</div>
<div class="lb" style="left:306px;top:946px;font-weight:bold;font-size:22.670px;line-height:28px;transform:scaleY(1.1);transform-origin:0 78%">10:55:14</div>

<div class="pn" style="left:592px;top:806px;width:293px;height:172px"></div>
<div class="sw" style="left:595px;top:811px;width:234px;height:22px;line-height:20px"><span>Sync def=1  -1  dB</span><i class="ab"></i></div>
<i class="cb" style="left:831px;top:814px;background:#f4f4f4;border-color:#c0c0c0"></i><div class="lb" style="left:849px;top:813px;color:#a0a0a0">ZAP</div>
<div class="sw" style="left:595px;top:837px;width:287px;height:22px;line-height:20px"><span>DF Tol def=600 +/-  50  Hz</span><i class="ab"></i></div>
<i class="cb" style="left:595px;top:872px"></i><div class="lb" style="left:613px;top:871px">Sh HF/VHF</div>
<div class="lb" style="left:752px;top:871px">TX RPT :</div>
<div class="in" style="left:814px;top:868px;width:52px;height:22px;line-height:20px;border-radius:3px 0 0 3px"><span>-23</span></div>
<i class="sa u" style="left:867px;top:868px;width:15px;height:11px"></i><i class="sa d" style="left:867px;top:878px;width:15px;height:11px"></i>
<div class="sw" style="left:595px;top:896px;width:104px;height:23px;line-height:21px;background:#f0f0f0;border-color:#909090;color:#a0a0a0"><span>TX/RX 60  s</span><i class="ab" style="background:#f0f0f0;opacity:.55;border-left:1px solid #909090"></i></div>
<div class="fr" style="left:702px;top:898px;width:50px;height:18px;line-height:17px;padding-left:4px;border-color:#c0c0c0 #fff #fff #c0c0c0">QRG :</div>
<div class="in" style="left:753px;top:896px;width:129px;height:23px"></div>
<div class="fr" style="left:595px;top:926px;width:87px;height:18px;font-size:12px;line-height:17px;text-align:center">RXF</div>
<i class="rd" style="left:683px;top:929px"></i><div class="lb" style="left:703px;top:927px">TX FIRST</div>
<i class="rd on" style="left:772px;top:929px"></i><div class="lb" style="left:791px;top:927px">TX SECOND</div>
<div class="bt" style="left:596px;top:951px;width:142px;height:21px;line-height:20px">GEN MSG</div>
<div class="bt" style="left:739px;top:951px;width:143px;height:21px;line-height:20px">AUTO IS OFF<i class="a" style="left:2px;top:2px;right:2px;bottom:2px;border:1px dotted #404040"></i></div>

<div class="pn" style="left:888px;top:806px;width:438px;height:172px"></div>
<div class="lb" style="left:890px;top:809px">RX</div>
<div class="lb" style="left:891px;top:826px;font-size:11.500px;line-height:13px;color:#a01010">+20</div>
<div class="lb" style="left:892px;top:962px;font-size:11.500px;line-height:13px;color:#1010c8">-20</div>
<svg class="a" style="left:892px;top:841px" width="18" height="119" viewBox="0 0 18 119"><rect x="0.500" y="0.500" width="17" height="118" fill="#ebe8cf" stroke="#c4c0a4"/><rect x="7.5" y="5.500" width="3" height="108" fill="#f8f8f8" stroke="#9a9a9a" stroke-width="0.800"/><path d="M2 11.5h4M12 11.5h4M2 17.5h4M12 17.5h4M2 23.5h4M12 23.5h4M2 28.5h4M12 28.5h4M2 34.5h4M12 34.5h4M2 40.5h4M12 40.5h4M2 46.5h4M12 46.5h4M2 52.5h4M12 52.5h4M2 58.5h4M12 58.5h4M2 63.5h4M12 63.5h4M2 69.5h4M12 69.5h4M2 75.5h4M12 75.5h4M2 81.5h4M12 81.5h4M2 87.5h4M12 87.5h4M2 93.5h4M12 93.5h4M2 98.5h4M12 98.5h4M2 104.5h4M12 104.5h4M2 110.5h4M12 110.5h4" stroke="#000" stroke-width="1"/><rect x="3.5" y="32" width="11" height="8" rx="1" fill="#b4b4b4" stroke="#8a8a8a" stroke-width="0.600"/><rect x="5.5" y="34.5" width="7" height="3" fill="#b01010"/></svg>
<div class="in" style="left:914px;top:809px;width:330px;height:22px;line-height:21px"><span>HB9Q HI8DL FK58</span></div>
<i class="rd" style="left:1248px;top:813px"></i>
<div class="bt" style="left:1265px;top:810px;width:34px;height:20px;line-height:19px">Tx1</div>
<div class="in" style="left:914px;top:833px;width:330px;height:22px;line-height:21px;background:#ffd2d2"><span>HB9Q HI8DL -23</span></div>
<i class="rd on" style="left:1248px;top:837px"></i>
<div class="bt" style="left:1265px;top:834px;width:34px;height:20px;line-height:19px">Tx2</div>
<div class="in" style="left:914px;top:857px;width:330px;height:22px;line-height:21px"><span>HB9Q HI8DL R-23</span></div>
<i class="rd" style="left:1248px;top:861px"></i>
<div class="bt" style="left:1265px;top:858px;width:34px;height:20px;line-height:19px">Tx3</div>
<div class="in" style="left:914px;top:881px;width:330px;height:22px;line-height:21px"><span>HB9Q HI8DL RRR</span></div>
<i class="rd" style="left:1248px;top:885px"></i>
<div class="bt" style="left:1265px;top:882px;width:34px;height:20px;line-height:19px">Tx4</div>
<div class="in" style="left:914px;top:905px;width:330px;height:22px;line-height:21px"><span>HB9Q HI8DL 73</span></div>
<i class="rd" style="left:1248px;top:909px"></i>
<div class="bt" style="left:1265px;top:906px;width:34px;height:20px;line-height:19px">Tx5</div>
<div class="in" style="left:914px;top:929px;width:330px;height:22px;line-height:21px"><span>CQ HI8DL FK58</span></div>
<i class="rd" style="left:1248px;top:933px"></i>
<div class="bt" style="left:1265px;top:930px;width:34px;height:20px;line-height:19px">Tx6</div>
<div class="in" style="left:914px;top:953px;width:330px;height:22px;line-height:21px"><span>CQ  HI8DL</span></div>
<i class="rd" style="left:1248px;top:957px"></i>
<div class="bt" style="left:1265px;top:954px;width:34px;height:20px;line-height:19px">Tx7</div>
<div class="lb" style="left:1304px;top:809px">TX</div>
<div class="lb" style="left:1301px;top:827px;font-size:11.500px;line-height:13px;color:#a01010;letter-spacing:-0.700px">MAX</div>
<div class="lb" style="left:1302px;top:963px;font-size:11.500px;line-height:13px;color:#1010c8">MIN</div>
<svg class="a" style="left:1304px;top:841px" width="18" height="120" viewBox="0 0 18 120"><rect x="0.500" y="0.500" width="17" height="119" fill="#ebe8cf" stroke="#c4c0a4"/><rect x="7.5" y="5.500" width="3" height="109" fill="#f8f8f8" stroke="#9a9a9a" stroke-width="0.800"/><path d="M2 11.5h4M12 11.5h4M2 17.5h4M12 17.5h4M2 23.5h4M12 23.5h4M2 29.5h4M12 29.5h4M2 35.5h4M12 35.5h4M2 40.5h4M12 40.5h4M2 46.5h4M12 46.5h4M2 52.5h4M12 52.5h4M2 58.5h4M12 58.5h4M2 64.5h4M12 64.5h4M2 70.5h4M12 70.5h4M2 76.5h4M12 76.5h4M2 82.5h4M12 82.5h4M2 87.5h4M12 87.5h4M2 93.5h4M12 93.5h4M2 99.5h4M12 99.5h4M2 105.5h4M12 105.5h4M2 111.5h4M12 111.5h4" stroke="#000" stroke-width="1"/><rect x="3.5" y="82" width="11" height="8" rx="1" fill="#b4b4b4" stroke="#8a8a8a" stroke-width="0.600"/><rect x="5.5" y="84.5" width="7" height="3" fill="#107018"/></svg>

</div></body></html>
